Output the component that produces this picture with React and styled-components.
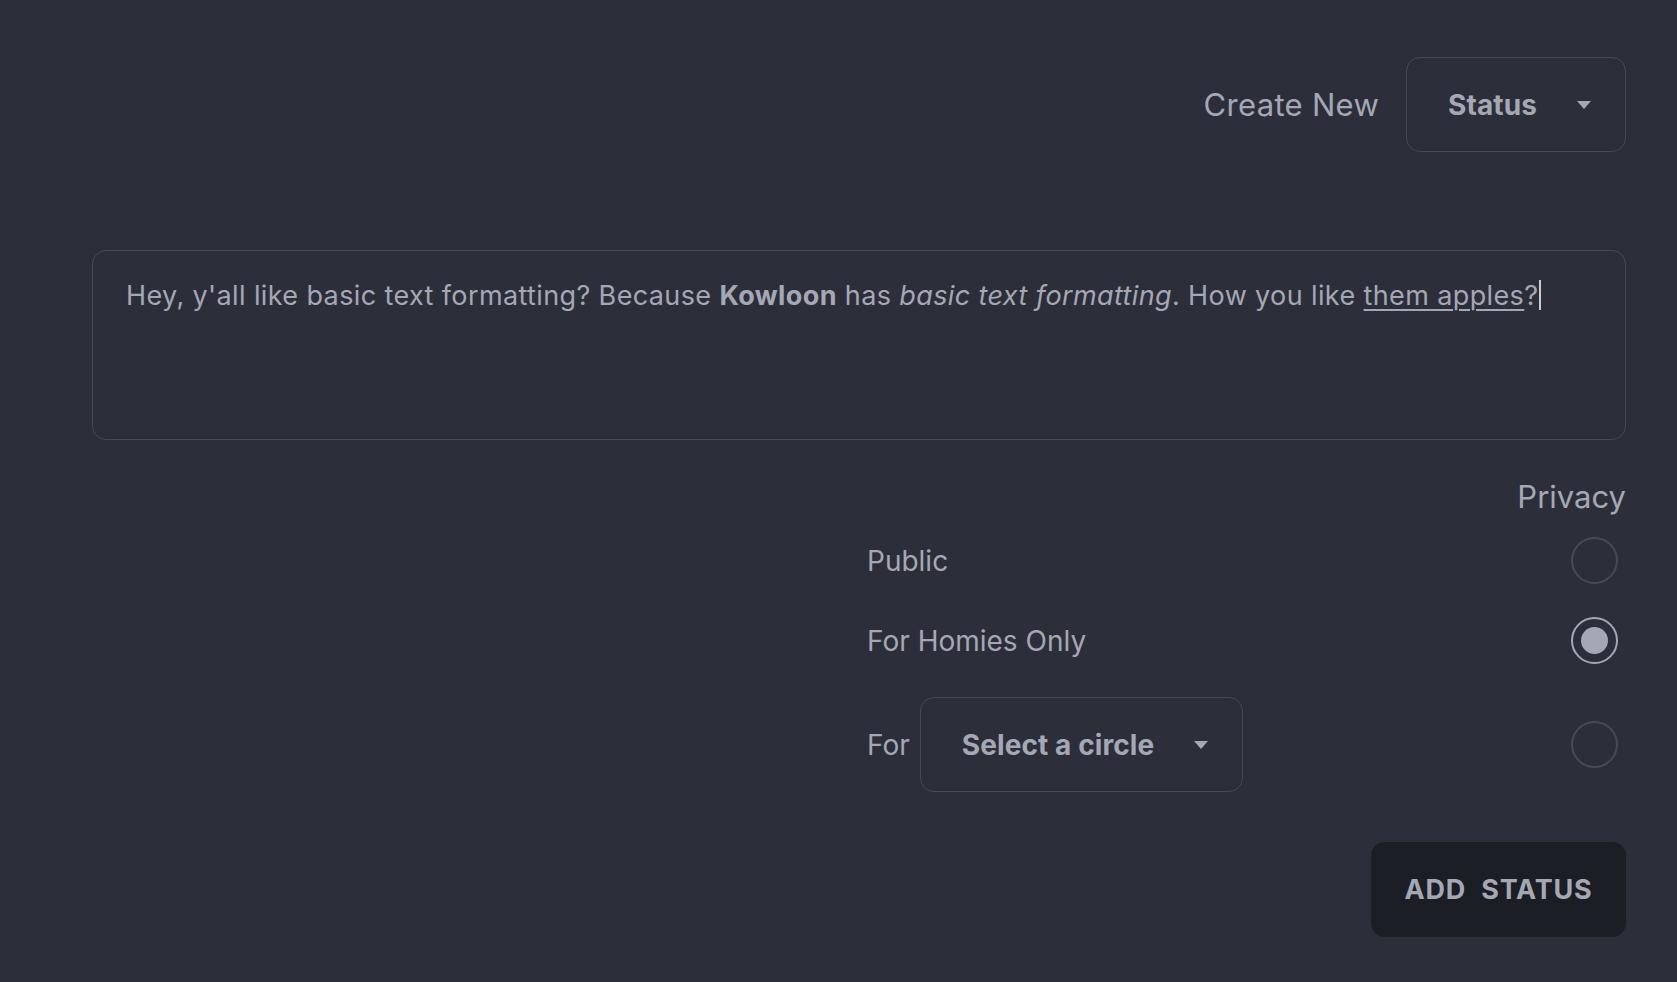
import React, { useState } from "react";
import styled, { createGlobalStyle } from "styled-components";

const GlobalStyle = createGlobalStyle`
  html, body {
    margin: 0;
    padding: 0;
    background: #2c2f3a;
  }
  body {
    font-family: Inter, "Noto Sans", "Liberation Sans", sans-serif;
    color: #a4a8b4;
  }
`;

const Page = styled.div`
  min-height: 100vh;
  box-sizing: border-box;
  padding: 57px 51px 40px 92px;
  display: flex;
  flex-direction: column;
`;

const Header = styled.div`
  display: flex;
  justify-content: flex-end;
  align-items: center;
  gap: 27px;
`;

const HeaderLabel = styled.span`
  font-size: 31px;
  line-height: 36px;
  letter-spacing: 0.3px;
`;

const SelectBox = styled.div`
  display: flex;
  align-items: center;
  box-sizing: border-box;
  height: 95px;
  padding: 0 34px 0 41px;
  gap: 40px;
  border: 1.5px solid #474a56;
  border-radius: 14px;
  font-size: 28px;
  font-weight: 700;
  letter-spacing: 0.1px;
  color: #a4a8b4;
  cursor: pointer;
`;

const Caret = styled.span`
  width: 0;
  height: 0;
  border-left: 7.5px solid transparent;
  border-right: 7.5px solid transparent;
  border-top: 8px solid #a4a8b4;
`;

const Editor = styled.div`
  margin-top: 98px;
  height: 190px;
  box-sizing: border-box;
  padding: 27px 33px 25px;
  border: 1.5px solid #474a56;
  border-radius: 14px;
  font-size: 27px;
  letter-spacing: 0.38px;
  line-height: 36px;
  color: #a4a8b4;
`;

const Underline = styled.span`
  text-decoration: underline;
  text-underline-offset: 4px;
  text-decoration-thickness: 1.5px;
`;

const TextCursor = styled.span`
  display: inline-block;
  width: 1.5px;
  height: 30px;
  margin-left: 1px;
  vertical-align: -5px;
  background: #c8ccd6;
`;

const PrivacyLabel = styled.div`
  margin-top: 39px;
  text-align: right;
  font-size: 31px;
  line-height: 36px;
`;

const RadioGroup = styled.div`
  margin-top: 22px;
  margin-left: auto;
  width: 759px;
  display: flex;
  flex-direction: column;
  gap: 33px;
`;

const Row = styled.label`
  display: flex;
  align-items: center;
  justify-content: space-between;
  padding-right: 8px;
  font-size: 28px;
  cursor: pointer;
`;

const RowLead = styled.div`
  display: flex;
  align-items: center;
  gap: 10px;
`;

const Radio = styled.span`
  box-sizing: border-box;
  width: 47px;
  height: 47px;
  border-radius: 50%;
  border: 2px solid ${(p) => (p.$checked ? "#a4a8b4" : "#474a56")};
  display: flex;
  align-items: center;
  justify-content: center;

  &::after {
    content: "";
    display: ${(p) => (p.$checked ? "block" : "none")};
    width: 27px;
    height: 27px;
    border-radius: 50%;
    background: #a4a8b4;
  }
`;

const Footer = styled.div`
  margin-top: 50px;
  display: flex;
  justify-content: flex-end;
`;

const SubmitButton = styled.button`
  height: 95px;
  width: 255px;
  border: none;
  border-radius: 14px;
  background: #1c1e25;
  color: #a4a8b4;
  font-family: inherit;
  font-size: 27px;
  font-weight: 700;
  letter-spacing: 0.8px;
  word-spacing: 8px;
  text-transform: uppercase;
  cursor: pointer;
`;

const options = [
  { id: "public", label: "Public" },
  { id: "homies", label: "For Homies Only" },
  { id: "circle", label: "For", select: "Select a circle" },
];

export default function App() {
  const [privacy, setPrivacy] = useState("homies");

  return (
    <Page>
      <GlobalStyle />
      <Header>
        <HeaderLabel>Create New</HeaderLabel>
        <SelectBox>
          Status
          <Caret />
        </SelectBox>
      </Header>

      <Editor>
        Hey, y'all like basic text formatting? Because <b>Kowloon</b> has{" "}
        <i>basic text formatting</i>. How you like{" "}
        <Underline>them apples</Underline>?
        <TextCursor />
      </Editor>

      <PrivacyLabel>Privacy</PrivacyLabel>
      <RadioGroup>
        {options.map((opt) => (
          <Row key={opt.id} onClick={() => setPrivacy(opt.id)}>
            <RowLead>
              {opt.label}
              {opt.select && (
                <SelectBox>
                  {opt.select}
                  <Caret />
                </SelectBox>
              )}
            </RowLead>
            <Radio $checked={privacy === opt.id} />
          </Row>
        ))}
      </RadioGroup>

      <Footer>
        <SubmitButton>Add Status</SubmitButton>
      </Footer>
    </Page>
  );
}
